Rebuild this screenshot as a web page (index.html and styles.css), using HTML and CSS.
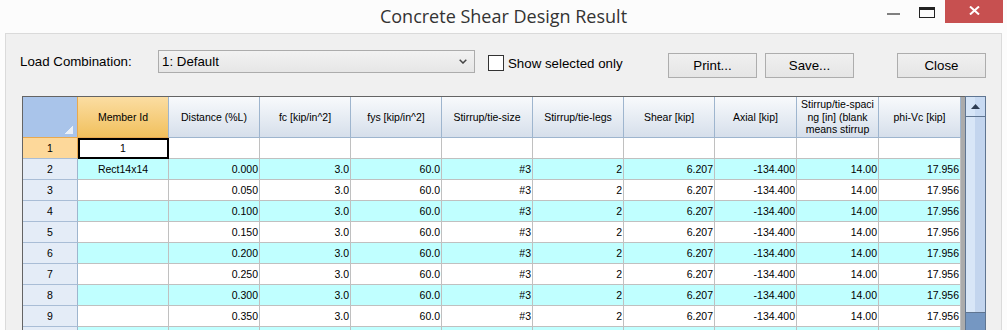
FILE: index.html
```html
<!DOCTYPE html>
<html lang="en">
<head>
  <meta charset="UTF-8" />
  <title>Concrete Shear Design Result</title>
  <link rel="stylesheet" href="styles.css">
</head>
<body>

  <div class="titlebar">
    <div class="title">Concrete Shear Design Result</div>
    <div class="controls">
      <div class="ctl-min"></div>
      <div class="ctl-max"></div>
      <div class="ctl-close">
        <svg width="11" height="9" viewBox="0 0 11 9"><path d="M1 0.5 L10 8.5 M10 0.5 L1 8.5" stroke="#fff" stroke-width="2"/></svg>
      </div>
    </div>
  </div>

  <div class="panel">
    <div class="toolbar">
      <div class="lbl">Load Combination:</div>
      <div class="combo">
        <span>1: Default</span>
        <svg width="8" height="5" viewBox="0 0 8 5"><polyline points="0.7,0.7 4,4 7.3,0.7" fill="none" stroke="#444" stroke-width="1.5"/></svg>
      </div>
      <label class="check"><span class="box"></span>Show selected only</label>
      <button class="btn btn-print">Print...</button>
      <button class="btn btn-save">Save...</button>
      <button class="btn btn-close">Close</button>
    </div>

    <div class="grid">
      <div class="sheet">
        <div class="row">
          <div class="corner"></div>
          <div class="hc hc-sel">Member Id</div>
          <div class="hc">Distance (%L)</div>
          <div class="hc">fc [kip/in^2]</div>
          <div class="hc">fys [kip/in^2]</div>
          <div class="hc">Stirrup/tie-size</div>
          <div class="hc">Stirrup/tie-legs</div>
          <div class="hc">Shear [kip]</div>
          <div class="hc">Axial [kip]</div>
          <div class="hc hc-wrap">Stirrup/tie-spaci<br>ng [in] (blank<br>means stirrup</div>
          <div class="hc">phi-Vc [kip]</div>
        </div>

        <div class="row">
          <div class="rh rh-sel">1</div>
          <div class="c mid sel">1</div>
          <div class="c"></div><div class="c"></div><div class="c"></div><div class="c"></div>
          <div class="c"></div><div class="c"></div><div class="c"></div><div class="c"></div><div class="c"></div>
        </div>

        <div class="row alt">
          <div class="rh">2</div>
          <div class="c mid">Rect14x14</div>
          <div class="c">0.000</div><div class="c">3.0</div><div class="c">60.0</div><div class="c">#3</div><div class="c">2</div>
          <div class="c">6.207</div><div class="c">-134.400</div><div class="c">14.00</div><div class="c">17.956</div>
        </div>

        <div class="row">
          <div class="rh">3</div>
          <div class="c mid"></div>
          <div class="c">0.050</div><div class="c">3.0</div><div class="c">60.0</div><div class="c">#3</div><div class="c">2</div>
          <div class="c">6.207</div><div class="c">-134.400</div><div class="c">14.00</div><div class="c">17.956</div>
        </div>

        <div class="row alt">
          <div class="rh">4</div>
          <div class="c mid"></div>
          <div class="c">0.100</div><div class="c">3.0</div><div class="c">60.0</div><div class="c">#3</div><div class="c">2</div>
          <div class="c">6.207</div><div class="c">-134.400</div><div class="c">14.00</div><div class="c">17.956</div>
        </div>

        <div class="row">
          <div class="rh">5</div>
          <div class="c mid"></div>
          <div class="c">0.150</div><div class="c">3.0</div><div class="c">60.0</div><div class="c">#3</div><div class="c">2</div>
          <div class="c">6.207</div><div class="c">-134.400</div><div class="c">14.00</div><div class="c">17.956</div>
        </div>

        <div class="row alt">
          <div class="rh">6</div>
          <div class="c mid"></div>
          <div class="c">0.200</div><div class="c">3.0</div><div class="c">60.0</div><div class="c">#3</div><div class="c">2</div>
          <div class="c">6.207</div><div class="c">-134.400</div><div class="c">14.00</div><div class="c">17.956</div>
        </div>

        <div class="row">
          <div class="rh">7</div>
          <div class="c mid"></div>
          <div class="c">0.250</div><div class="c">3.0</div><div class="c">60.0</div><div class="c">#3</div><div class="c">2</div>
          <div class="c">6.207</div><div class="c">-134.400</div><div class="c">14.00</div><div class="c">17.956</div>
        </div>

        <div class="row alt">
          <div class="rh">8</div>
          <div class="c mid"></div>
          <div class="c">0.300</div><div class="c">3.0</div><div class="c">60.0</div><div class="c">#3</div><div class="c">2</div>
          <div class="c">6.207</div><div class="c">-134.400</div><div class="c">14.00</div><div class="c">17.956</div>
        </div>

        <div class="row">
          <div class="rh">9</div>
          <div class="c mid"></div>
          <div class="c">0.350</div><div class="c">3.0</div><div class="c">60.0</div><div class="c">#3</div><div class="c">2</div>
          <div class="c">6.207</div><div class="c">-134.400</div><div class="c">14.00</div><div class="c">17.956</div>
        </div>

        <!-- next row only peeks in at the bottom edge -->
        <div class="row alt">
          <div class="rh"></div>
          <div class="c"></div><div class="c"></div><div class="c"></div><div class="c"></div><div class="c"></div>
          <div class="c"></div><div class="c"></div><div class="c"></div><div class="c"></div><div class="c"></div>
        </div>
      </div>

      <div class="gutter"></div>

      <div class="scroll">
        <div class="sb-up">
          <svg width="9" height="5" viewBox="0 0 9 5"><polygon points="0,5 4.5,0 9,5" fill="#2d3c52"/></svg>
        </div>
        <div class="sb-thumb"></div>
        <div class="sb-track"></div>
      </div>
    </div>
  </div>

</body>
</html>
```

FILE: styles.css
```css
:root {
  --frame: #fcfcfc;
  --panel: #f0f0f0;
  --head-line: #9eb5ce;
  --sel-line: #e9a94f;
  --cell-line: #c0c0c0;
  --cyan: #c0ffff;
  --scroll-line: #5f7591;
}

* {
  box-sizing: border-box;
}

html, body {
  margin: 0;
}

body {
  width: 1007px;
  height: 330px;
  overflow: hidden;
  background: var(--frame);
  font-family: "Liberation Sans", Arial, sans-serif;
  color: #000;
}

/* window title */
.titlebar {
  height: 33px;
  display: grid;
  grid-template-columns: 1fr auto 1fr;
}

.title {
  grid-column: 2;
  font-family: "Open Sans", sans-serif;
  font-size: 18px;
  line-height: 24px;
  padding-top: 4px;
  color: #333;
  white-space: nowrap;
}

.controls {
  justify-self: end;
  display: flex;
  align-items: flex-start;
  margin-right: 4px;
}

.ctl-min {
  width: 13px;
  height: 2px;
  margin-top: 13px;
  margin-right: 19px;
  background: #808080;
}

.ctl-max {
  width: 16px;
  height: 11px;
  margin-top: 7px;
  margin-right: 10px;
  border: 1px solid #222;
  border-top-width: 3px;
}

.ctl-close {
  width: 58px;
  height: 23px;
  background: #c75050;
  display: flex;
  justify-content: center;
  padding-top: 6px;
}

/* dialog body */
.panel {
  margin: 0 5px;
  height: 297px;
  border: 1px solid #dadada;
  border-bottom: 0;
  background: var(--panel);
}

.toolbar {
  height: 62px;
  display: flex;
  align-items: flex-start;
  padding: 16px 15px 0 14px;
  font-size: 13.3px;
  white-space: nowrap;
}

.lbl {
  width: 138px;
  line-height: 23px;
}

.combo {
  width: 317px;
  height: 23px;
  border: 1px solid #acacac;
  background: linear-gradient(#f2f2f2, #e6e6e6);
  display: flex;
  align-items: center;
  justify-content: space-between;
  padding: 0 7px 0 3px;
}

.check {
  margin-left: 13px;
  margin-top: 5px;
  height: 16px;
  display: flex;
  align-items: center;
  gap: 4px;
}

.box {
  width: 16px;
  height: 16px;
  border: 1px solid #333;
  background: #fff;
}

.btn {
  margin-top: 3px;
  width: 89px;
  height: 25px;
  padding: 0;
  border: 1px solid #adadad;
  background: linear-gradient(#f0f0f0, #e5e5e5);
  font: inherit;
  color: #000;
}

.btn-print {
  margin-left: auto;
}

.btn-save {
  margin-left: 8px;
}

.btn-close {
  margin-left: 43px;
}

/* result grid */
.grid {
  display: flex;
  margin-left: 16px;
  height: 240px;
}

.sheet {
  display: grid;
  grid-template-columns: 55px repeat(7, 91px) repeat(3, 82px);
  grid-template-rows: 41px;
  grid-auto-rows: 21px;
  align-content: start;
  border-left: 1px solid #646464;
  border-top: 1px solid #646464;
  font-size: 10.5px;
}

.row {
  display: contents;
}

.corner {
  background: linear-gradient(135deg, transparent 50%, #eaf0f8 50%) no-repeat right 4px bottom 3px / 8px 8px, #a9c4ea;
  border-right: 1px solid var(--sel-line);
  border-bottom: 1px solid var(--sel-line);
}

.hc {
  background: linear-gradient(#f8fafc, #d6dfeb);
  border-right: 1px solid var(--head-line);
  border-bottom: 1px solid var(--head-line);
  display: flex;
  align-items: center;
  justify-content: center;
  text-align: center;
  overflow: hidden;
  white-space: nowrap;
}

.hc-sel {
  background: linear-gradient(#fbdda2, #f1c05d);
  border-bottom-color: var(--sel-line);
}

.hc-wrap {
  line-height: 12.5px;
}

.rh {
  background: #e4ecf7;
  border-right: 1px solid var(--head-line);
  border-bottom: 1px solid #a9bdd6;
  display: flex;
  align-items: center;
  justify-content: center;
}

.rh-sel {
  background: #fdd89a;
  border-right-color: var(--sel-line);
}

.c {
  background: #fff;
  border-right: 1px solid var(--cell-line);
  border-bottom: 1px solid var(--cell-line);
  display: flex;
  align-items: center;
  justify-content: flex-end;
  padding-right: 1px;
  white-space: nowrap;
}

.alt .c {
  background: var(--cyan);
}

.c.mid {
  justify-content: center;
  padding-right: 0;
}

.c.sel {
  outline: 2px solid #000;
  outline-offset: -2px;
}

.gutter {
  width: 4px;
  background: #ababab;
  border-top: 1px solid #646464;
}

.scroll {
  width: 21px;
  border: 1px solid var(--scroll-line);
  display: flex;
  flex-direction: column;
}

.sb-up {
  height: 20px;
  border-bottom: 1px solid var(--scroll-line);
  background: linear-gradient(90deg, #d6e5f7 50%, #c8daf2 50%);
  display: flex;
  align-items: center;
  justify-content: center;
}

.sb-thumb {
  height: 196px;
  border-bottom: 1px solid var(--scroll-line);
  background: linear-gradient(90deg, #d8e6f7 50%, #c3d5ee 50%);
}

.sb-track {
  flex: 1;
  background: #7597c2;
}
```
